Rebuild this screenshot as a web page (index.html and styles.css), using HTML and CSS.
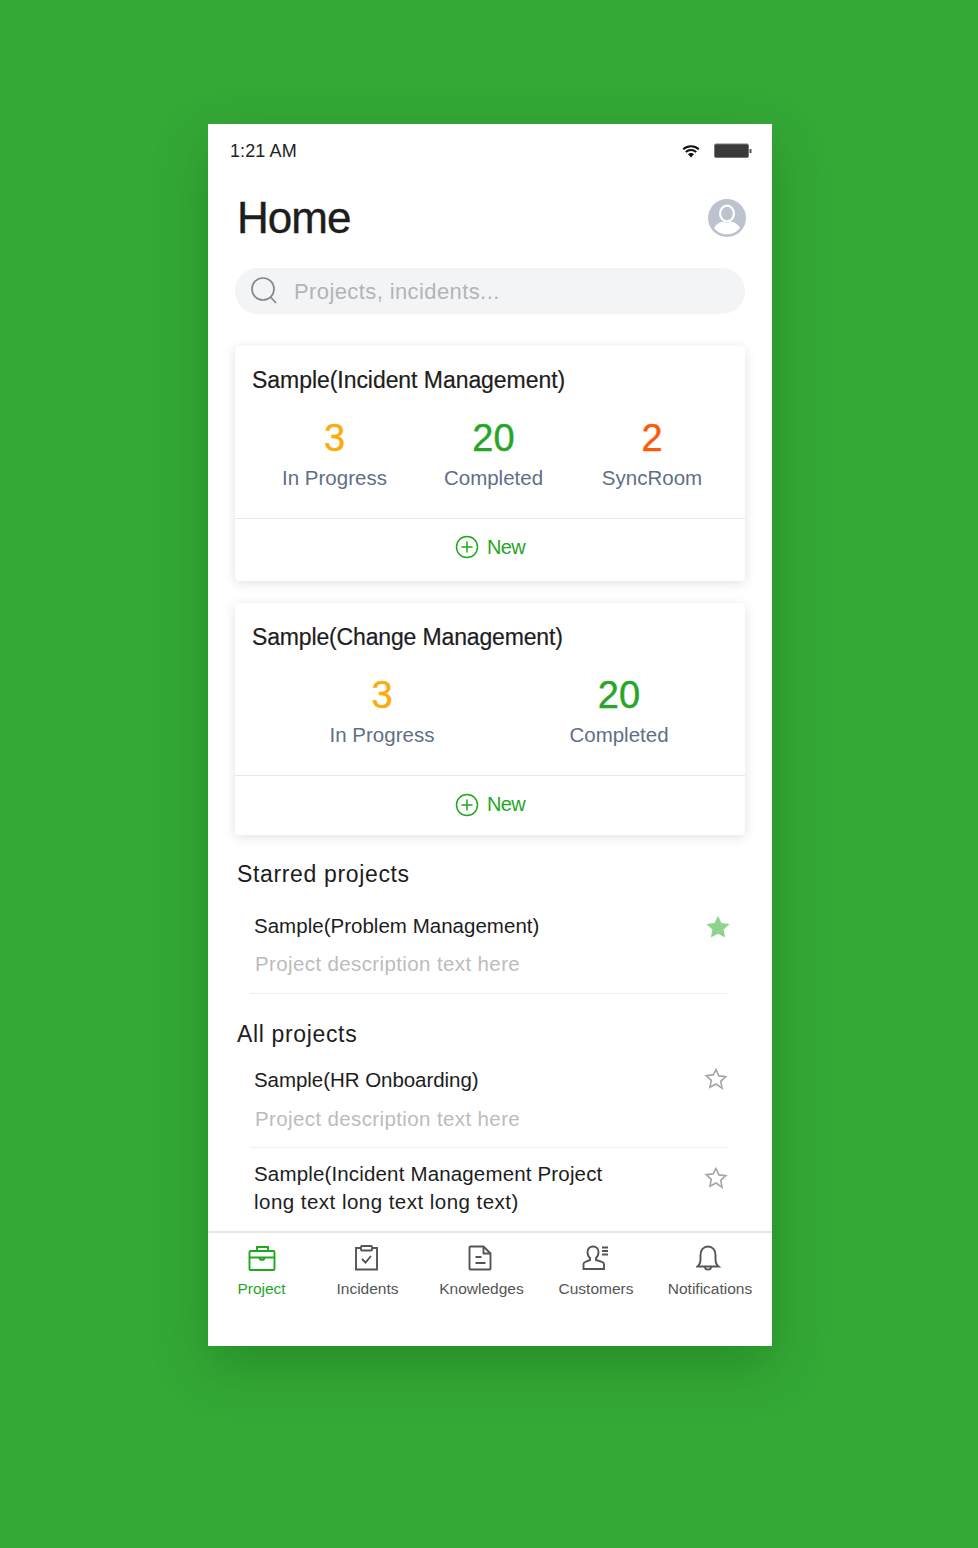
FILE: index.html
```html
<!DOCTYPE html>
<html>
<head>
  <title>Home</title>
  <link rel="stylesheet" href="styles.css">
</head>
<body>
  <div class="phone">
    <div class="status-bar">
      <span class="time">1:21 AM</span>
      <div class="status-icons">
        <svg class="wifi" width="18" height="14" viewBox="0 0 18 14">
          <path d="M1.200 5.200a11.500 11.500 0 0 1 15.600 0M3.800 8a7.600 7.600 0 0 1 10.400 0" fill="none" stroke="#111" stroke-width="2"/>
          <path d="M6 10.300a4.200 4.200 0 0 1 6 0L9 13.500z" fill="#111"/>
        </svg>
        <svg class="battery" width="38" height="16" viewBox="0 0 38 16">
          <rect x="0.500" y="1" width="34" height="13.500" rx="1.500" fill="#3a3a3a" stroke="#777"/>
          <rect x="35.500" y="6" width="2" height="4" fill="#555"/>
        </svg>
      </div>
    </div>

    <div class="header">
      <h1>Home</h1>
      <svg class="avatar" width="38" height="38" viewBox="0 0 38 38">
        <circle cx="19" cy="19" r="19" fill="#bcc3ce"/>
        <ellipse cx="19" cy="14.500" rx="8" ry="9" fill="#fff"/>
        <ellipse cx="19" cy="14.500" rx="5.800" ry="6.800" fill="#bcc3ce"/>
        <path d="M6 29c2-4 6-6 9-6.500 2.500 1.500 5.500 1.500 8 0 3 .5 7 2.500 9 6.500a16.500 16.500 0 0 1-26 0z" fill="#fff"/>
      </svg>
    </div>

    <div class="search">
      <svg width="26" height="28" viewBox="0 0 26 28">
        <circle cx="12" cy="12" r="11" fill="none" stroke="#85898d" stroke-width="1.700"/>
        <path d="M19.500 20l5.500 6" fill="none" stroke="#85898d" stroke-width="1.700"/>
      </svg>
      <span class="placeholder">Projects, incidents...</span>
    </div>

    <div class="card card-first">
      <div class="card-title">Sample(Incident Management)</div>
      <div class="stats three">
        <div class="stat"><div class="num orange">3</div><div class="label">In Progress</div></div>
        <div class="stat"><div class="num green">20</div><div class="label">Completed</div></div>
        <div class="stat"><div class="num red">2</div><div class="label">SyncRoom</div></div>
      </div>
      <div class="new">
        <svg width="24" height="24" viewBox="0 0 24 24">
          <circle cx="12" cy="12" r="10.500" fill="none" stroke="#1fa71f" stroke-width="1.500"/>
          <path d="M12 6.500v11M6.500 12h11" stroke="#1fa71f" stroke-width="1.500"/>
        </svg>
        <span>New</span>
      </div>
    </div>

    <div class="card card-second">
      <div class="card-title tight">Sample(Change Management)</div>
      <div class="stats two">
        <div class="stat"><div class="num orange">3</div><div class="label">In Progress</div></div>
        <div class="stat"><div class="num green">20</div><div class="label">Completed</div></div>
      </div>
      <div class="new short">
        <svg width="24" height="24" viewBox="0 0 24 24">
          <circle cx="12" cy="12" r="10.500" fill="none" stroke="#1fa71f" stroke-width="1.500"/>
          <path d="M12 6.500v11M6.500 12h11" stroke="#1fa71f" stroke-width="1.500"/>
        </svg>
        <span>New</span>
      </div>
    </div>

    <h2 class="section starred">Starred projects</h2>
    <div class="project first-starred">
      <div class="project-text">
        <div class="project-name name-problem">Sample(Problem Management)</div>
        <div class="project-desc">Project description text here</div>
      </div>
      <svg class="star star-on" width="26" height="26" viewBox="0 0 24 24">
        <path d="M12 1.500l3.200 6.900 7.500.9-5.500 5.100 1.400 7.400L12 18.200l-6.600 3.600 1.400-7.400L1.300 9.300l7.500-.9z" fill="#8ed48f"/>
      </svg>
    </div>

    <h2 class="section all">All projects</h2>
    <div class="project first-all">
      <div class="project-text">
        <div class="project-name name-hr">Sample(HR Onboarding)</div>
        <div class="project-desc desc-low">Project description text here</div>
      </div>
      <svg class="star" width="24" height="24" viewBox="0 0 24 24">
        <path d="M12 2.500l2.900 6.400 6.900.8-5.100 4.700 1.400 6.900L12 17l-6.100 3.300 1.400-6.900-5.100-4.700 6.900-.8z" fill="none" stroke="#a5a5a5" stroke-width="1.600"/>
      </svg>
    </div>
    <div class="project last">
      <div class="project-text">
        <div class="project-name">Sample(Incident Management Project<br><span class="long-line">long text long text long text)</span></div>
      </div>
      <svg class="star star-low" width="24" height="24" viewBox="0 0 24 24">
        <path d="M12 2.500l2.900 6.400 6.900.8-5.100 4.700 1.400 6.900L12 17l-6.100 3.300 1.400-6.900-5.100-4.700 6.900-.8z" fill="none" stroke="#a5a5a5" stroke-width="1.600"/>
      </svg>
    </div>

    <div class="tabbar">
      <div class="tab active">
        <svg width="28" height="28" viewBox="0 0 28 28" fill="none" stroke="#1fa71f" stroke-width="1.900">
          <rect x="1.500" y="7" width="25" height="19" rx="1"/>
          <path d="M9 7V3h11v4M1.500 13.500h25M11.500 13.500c0 3.200 5 3.200 5 0"/>
        </svg>
        <span>Project</span>
      </div>
      <div class="tab">
        <svg width="28" height="28" viewBox="1.500 0 28 28" fill="none" stroke="#555" stroke-width="1.900">
          <path d="M8.500 4H3.500v21.500h21V4h-5"/>
          <rect x="8.500" y="2" width="11" height="4.500" rx="1"/>
          <path d="M9.500 15l3.500 3.500 5.500-6.500"/>
        </svg>
        <span>Incidents</span>
      </div>
      <div class="tab">
        <svg width="28" height="28" viewBox="2 0 28 28" fill="none" stroke="#555" stroke-width="1.900">
          <path d="M17.500 2.500H4.500a1 1 0 0 0-1 1v21a1 1 0 0 0 1 1h19a1 1 0 0 0 1-1V9.500z"/>
          <path d="M17.500 3v6.500h7M9.500 13h6M9.500 19h10"/>
        </svg>
        <span>Knowledges</span>
      </div>
      <div class="tab">
        <svg width="28" height="28" viewBox="0 0 28 28" fill="none" stroke="#555" stroke-width="1.900">
          <path d="M11 2.500c3.200 0 5.500 2.200 5.500 5.500 0 2.800-1 4.800-2.500 6v2l6 1.800c1.500.5 2 1.200 2 2.500V25H1.500v-4.700c0-1.300.5-2 2-2.500L8 16v-2c-1.500-1.200-2.500-3.200-2.500-6 0-3.300 2.300-5.500 5.500-5.500z"/>
          <path d="M20 3.500h6M20 7h6M20 10.500h6"/>
        </svg>
        <span>Customers</span>
      </div>
      <div class="tab">
        <svg width="28" height="28" viewBox="2 0 28 28" fill="none" stroke="#555" stroke-width="1.900">
          <path d="M3.500 22.500c2-1.500 3-4 3-7.500v-4c0-5 3-8.500 7.500-8.500s7.500 3.500 7.500 8.500v4c0 3.500 1 6 3 7.500z"/>
          <path d="M11 23c0 3.500 6 3.500 6 0"/>
        </svg>
        <span>Notifications</span>
      </div>
    </div>
  </div>
</body>
</html>
```

FILE: styles.css
```css
* {
  box-sizing: border-box;
}

html, body {
  margin: 0;
  padding: 0;
}

body {
  width: 978px;
  height: 1548px;
  background-color: #34a936;
  font-family: "Liberation Sans", Arial, sans-serif;
  padding-top: 124px;
  padding-left: 208px;
  overflow: hidden;
}

.phone {
  width: 564px;
  height: 1222px;
  background-color: #fff;
  box-shadow: 0 20px 50px rgba(0, 60, 0, 0.25);
}

.status-bar {
  height: 54px;
  padding: 0 20px 0 22px;
  display: flex;
  justify-content: space-between;
  align-items: center;
}

.time {
  font-size: 18px;
  color: #222;
  letter-spacing: 0.1px;
}

.status-icons {
  display: flex;
  align-items: center;
  gap: 14px;
}

.header {
  height: 70px;
  padding: 9px 26px 0 29px;
  display: flex;
  justify-content: space-between;
  align-items: center;
}

h1 {
  margin: 0;
  font-size: 44px;
  font-weight: 400;
  color: #1d1d1d;
  letter-spacing: -1px;
  -webkit-text-stroke: 0.4px #1d1d1d;
}

.search {
  margin: 20px 27px 0;
  height: 46px;
  border-radius: 23px;
  background-color: #f3f4f6;
  padding-left: 16px;
  display: flex;
  align-items: center;
  gap: 17px;
}

.placeholder {
  margin-top: 2px;
  font-size: 22px;
  color: #b2b5b8;
  letter-spacing: 0.4px;
}

.card {
  margin: 0 27px;
  background-color: #fff;
  border-radius: 4px;
  box-shadow: 0 2px 12px rgba(0, 0, 0, 0.12);
}

.card-first {
  margin-top: 32px;
}

.card-second {
  margin-top: 22px;
}

.card-title {
  padding: 21px 17px 0;
  height: 58px;
  font-size: 23px;
  letter-spacing: -0.05px;
  color: #1d1d1d;
  -webkit-text-stroke: 0.2px #1d1d1d;
}

.card-title.tight {
  letter-spacing: -0.15px;
}

.stats {
  display: grid;
  height: 114px;
  text-align: center;
}

.stats.three {
  padding-left: 30px;
  grid-template-columns: 139px 179px 138px;
}

.stats.two {
  grid-template-columns: 294px 180px;
}

.num {
  font-size: 38px;
  line-height: 44px;
  margin-top: 12px;
  -webkit-text-stroke: 0.4px;
}

.label {
  font-size: 20.500px;
  line-height: 26px;
  margin-top: 5px;
  color: #5f6f86;
}

.orange {
  color: #fbab0a;
}

.green {
  color: #27a527;
}

.red {
  color: #fc5a0a;
}

.new {
  height: 63px;
  border-top: 1px solid #e8e8e8;
  display: flex;
  justify-content: center;
  align-items: center;
  gap: 8px;
  padding: 0 0 6px 0;
  font-size: 20px;
  color: #1fa71f;
  letter-spacing: -0.6px;
}

.new.short {
  height: 60px;
  padding-bottom: 2px;
}

.section {
  margin: 0 29px;
  font-size: 23px;
  font-weight: 400;
  color: #1d1d1d;
  line-height: 28px;
  letter-spacing: 0.65px;
}

.starred {
  margin-top: 25px;
}

.all {
  margin-top: 26px;
}

.project {
  margin: 0 45px 0 42px;
  padding-left: 4px;
  display: flex;
  justify-content: space-between;
}

.first-starred {
  height: 106px;
  padding-top: 24px;
  border-bottom: 1px solid #eee;
}

.first-all {
  height: 100px;
  padding-top: 18px;
  border-bottom: 1px solid #eee;
}

.project.last {
  padding-top: 12px;
  height: 83px;
}

.star {
  margin-top: 1px;
  margin-right: -1px;
}

.star-on {
  margin-top: 2px;
  margin-right: -4px;
}

.star-low {
  margin-top: 6px;
}

.project-name {
  font-size: 20.500px;
  line-height: 28px;
  letter-spacing: 0.16px;
  color: #1d1d1d;
}

.name-problem {
  letter-spacing: 0.02px;
}

.name-hr {
  letter-spacing: -0.05px;
}

.long-line {
  letter-spacing: 0.47px;
}

.project-desc {
  font-size: 20.500px;
  line-height: 28px;
  margin-top: 10px;
  margin-left: 1px;
  letter-spacing: 0.38px;
  color: #bcbcbc;
}

.desc-low {
  margin-top: 11px;
}

.tabbar {
  height: 114px;
  border-top: 2px solid #e6e6e6;
  display: grid;
  grid-template-columns: 107px 105px 123px 106px 122px;
  text-align: center;
  padding-top: 11px;
}

.tab {
  display: flex;
  flex-direction: column;
  align-items: center;
  font-size: 15.500px;
  color: #555;
}

.tab span {
  margin-top: 8px;
}

.tab.active {
  color: #1fa71f;
}
```
